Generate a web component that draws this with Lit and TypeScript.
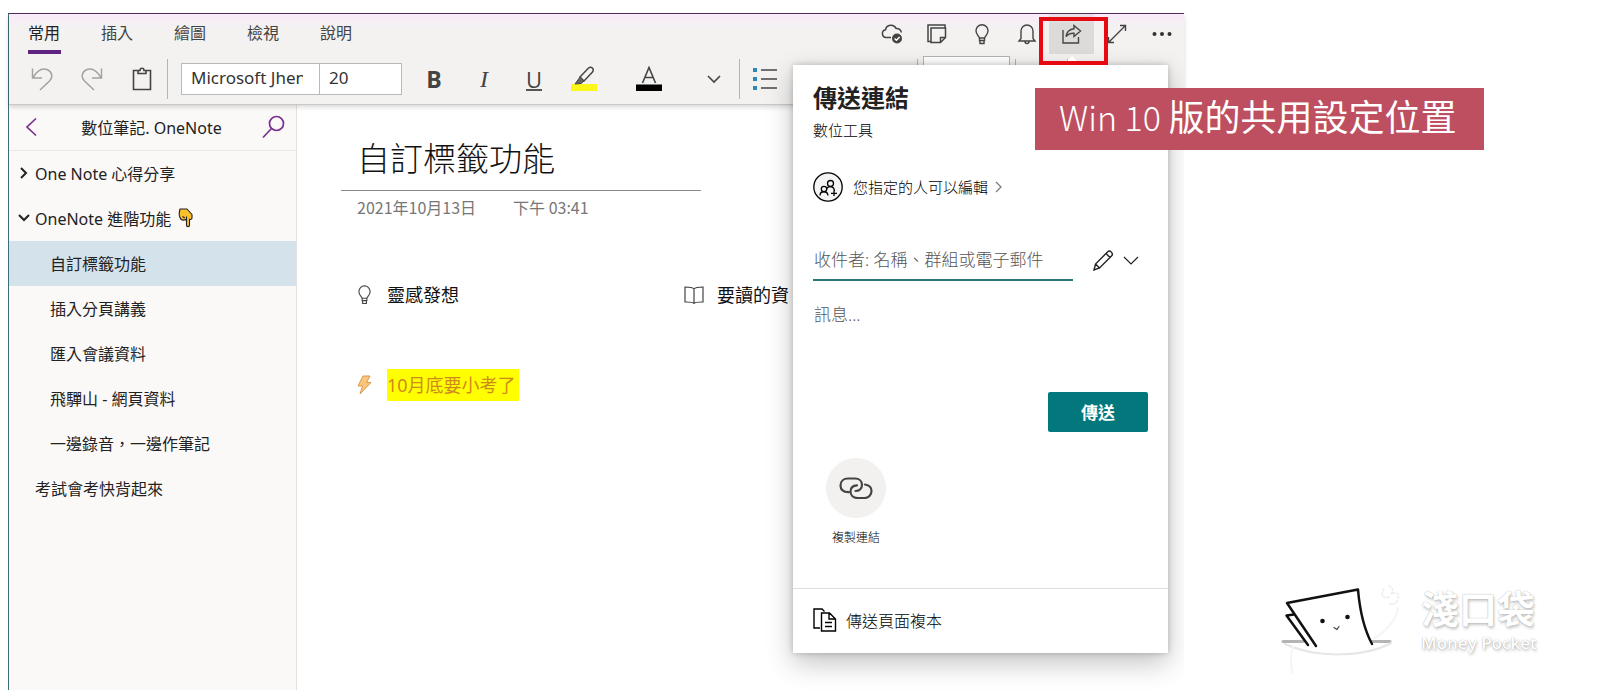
import { LitElement, html, css, svg } from "lit";
import { customElement, state } from "lit/decorators.js";
import { classMap } from "lit/directives/class-map.js";

const base = css`
  * { box-sizing: border-box; }
  button, input, textarea {
    font: inherit;
    color: inherit;
    background: none;
    border: 0;
    padding: 0;
    margin: 0;
    border-radius: 0;
    outline: none;
  }
  button { cursor: pointer; }
  svg { display: block; fill: none; stroke: currentColor; flex: none; }
`;

const bulb = svg`<path d="M6.500 16.500v-2C6.300 12 3 11 3 6.800a6 6 0 0 1 12 0C15 11 11.700 12 11.500 14.500v2zM6.500 14h5M7 16.500v3h4v-3"/>`;

@customElement("ribbon-bar")
class RibbonBar extends LitElement {
  @state() tab = "常用";

  static styles = [base, css`
    :host {
      display: block;
      background: linear-gradient(#f9e9f9, #f3f2f1 14px);
      border-bottom: 1px solid #c9c8c7;
      box-shadow: 0 2px 5px rgba(0, 0, 0, 0.16);
      color: #444;
    }
    .top { display: flex; height: 40px; }
    .tabs { display: flex; flex: 1; padding-left: 19px; gap: 40px; }
    .tab { width: 33px; height: 40px; font-size: 16px; white-space: nowrap; border-bottom: 4px solid transparent; text-align: left; }
    .tab span { display: block; line-height: 38px; height: 36px; }
    .tab.on { border-bottom-color: #5f2482; color: #222; }
    .ic { width: 45px; height: 40px; display: grid; place-items: center; }
    .ic.on { background: linear-gradient(rgba(220, 219, 218, 0.5), #dcdbda 10px); }
    .tools { display: flex; align-items: center; height: 50px; padding-left: 8px; overflow: hidden; }
    .tool { width: 50px; height: 50px; display: grid; place-items: center; flex: none; }
    .tool.off { color: #a3a2a1; }
    .tool.color { width: 80px; }
    .sep { width: 1px; height: 40px; background: #b5b4b3; flex: none; }
    .combo { display: flex; margin: 0 7px 0 13px; }
    .combo input {
      height: 32px;
      background: #fff;
      border: 1px solid #bab9b8;
      padding: 0 16px 3px 9px;
      font-size: 17px;
      color: #333;
      min-width: 0;
    }
    .face { width: 139px; }
    .size { width: 83px; margin-left: -1px; }
    .b { font: bold 23px "Open Sans", sans-serif; }
    .i { font: italic 24px "Liberation Serif", serif; }
    .u { font: 22px/24px "Open Sans", sans-serif; border-bottom: 2px solid #555; height: 24px; width: 16px; display: grid; place-items: center; }
    .sep.far { margin-left: 127px; }
    .style { margin-left: 5px; align-self: flex-start; margin-top: 2px; width: 87px; height: 44px; background: #fff; border: 1px solid #b5b4b3; }
    .sep.near { margin-left: 5px; }
    .sep.next { margin-left: 51px; }
  `];

  render() {
    return html`
      <div class="top">
        <nav class="tabs">
          ${["常用", "插入", "繪圖", "檢視", "說明"].map((t) => html`
            <button class=${classMap({ tab: true, on: t === this.tab })} @click=${() => (this.tab = t)}><span>${t}</span></button>`)}
        </nav>
        <button class="ic" aria-label="同步">
          <svg width="22" height="22" viewBox="0 0 22 22" stroke-width="1.5"><path d="M10 14.5H5a3.9 3.9 0 0 1-.5-7.7 5.6 5.6 0 0 1 10.600-1.3 4.300 4.300 0 0 1 5.200 4"/><circle cx="16" cy="15.500" r="5" fill="#444" stroke="none"/><path d="M13.600 15.500l1.800 1.800 3.200-3.400" stroke="#fff" stroke-width="1.400"/></svg>
        </button>
        <button class="ic" aria-label="摘要">
          <svg width="20" height="20" viewBox="0 0 20 20" stroke-width="1.500"><path d="M3.500 17.500h-2.500V1h17v2.500M4 4h14.500v9.500l-5 5H4zM18.500 13.500h-5v5"/></svg>
        </button>
        <button class="ic" aria-label="秘訣"><svg width="18" height="21" viewBox="0 0 18 21" stroke-width="1.400">${bulb}</svg></button>
        <button class="ic" aria-label="通知">
          <svg width="20" height="22" viewBox="0 0 20 22" stroke-width="1.400"><path d="M4 15.500V8a6 6 0 0 1 12 0v7.500l2 2.500H2zM8 18.500a2 2 0 0 0 4 0"/></svg>
        </button>
        <button class="ic on" aria-label="共用">
          <svg width="22" height="22" viewBox="0 0 22 22" stroke-width="1.400"><path d="M2 7v13h15.500v-6M13 2.500L19.500 8 13 13.500v-3.300c-3.500-.2-6 .8-8 3.300.8-4.500 3.500-7.300 8-7.700z"/></svg>
        </button>
        <button class="ic" aria-label="全螢幕">
          <svg width="20" height="20" viewBox="0 0 20 20" stroke-width="1.400"><path d="M1.500 18.500l17-17M13 1.500h5.500V7M1.500 13v5.500H7"/></svg>
        </button>
        <button class="ic" aria-label="更多">
          <svg width="20" height="6" viewBox="0 0 20 6"><g fill="#333" stroke="none"><circle cx="2.500" cy="3" r="2"/><circle cx="10" cy="3" r="2"/><circle cx="17.500" cy="3" r="2"/></g></svg>
        </button>
      </div>
      <div class="tools">
        <button class="tool off" aria-label="復原"><svg width="22" height="24" viewBox="0 0 22 24" stroke-width="1.500"><path d="M1.500 1.500V11H11M2 10.500C6 4 11 .8 16 2.500c5 2 6.500 7.500 2.500 11.500L9 23"/></svg></button>
        <button class="tool off" aria-label="重做"><svg width="22" height="24" viewBox="0 0 22 24" stroke-width="1.500"><path d="M20.500 1.500V11H11M20 10.500C16 4 11 .8 6 2.500c-5 2-6.500 7.500-2.500 11.500L13 23"/></svg></button>
        <button class="tool" aria-label="貼上"><svg width="20" height="24" viewBox="0 0 20 24" stroke-width="1.600"><path d="M6 3.500H1.500v19h17v-19H14M6 6.500v-3h2c0-3 4-3 4 0h2v3z"/></svg></button>
        <i class="sep"></i>
        <div class="combo">
          <input class="face" aria-label="字型" value="Microsoft Jhen">
          <input class="size" aria-label="字型大小" value="20">
        </div>
        <button class="tool b">B</button>
        <button class="tool i">I</button>
        <button class="tool"><span class="u">U</span></button>
        <button class="tool" aria-label="螢光筆"><svg width="26" height="26" viewBox="0 0 26 26" stroke-width="1.500"><path d="M0 18h26v7H0z" fill="#fbf719" stroke="none"/><path d="M9 11l8.500-9c3-2 6 .8 4 4L13 15z"/><path d="M9 11l4 4-3 2.500-6 .5z" fill="#666" stroke-width="1"/></svg></button>
        <button class="tool color" aria-label="字型色彩"><svg width="26" height="26" viewBox="0 0 26 26" stroke-width="1.600"><path d="M0 18.500h26V25H0z" fill="#000" stroke="none"/><path d="M6.500 17L13 1.500 19.500 17M8.800 11.500h8.400"/></svg></button>
        <button class="tool" aria-label="更多格式"><svg width="14" height="9" viewBox="0 0 14 9" stroke-width="1.600"><path d="M1 1l6 6 6-6"/></svg></button>
        <i class="sep"></i>
        <button class="tool" aria-label="項目符號"><svg width="24" height="24" viewBox="0 0 24 24"><path d="M0 1h4v4H0zM0 10h4v4H0zM0 19h4v4H0z" fill="#2f87b5" stroke="none"/><path d="M8 3h16M8 12h16M8 21h16" stroke-width="1.500"/></svg></button>
        <i class="sep far"></i>
        <i class="style"></i>
        <i class="sep near"></i>
        <i class="sep next"></i>
      </div>`;
  }
}

@customElement("page-list")
class PageList extends LitElement {
  @state() current = "自訂標籤功能";

  static styles = [base, css`
    :host { display: block; width: 288px; flex: none; background: #faf9f8; border-right: 1px solid #e3e2e1; color: #222; font-size: 16px; }
    .head { display: flex; align-items: center; height: 46px; padding: 0 11px 2px 16px; color: #7a2f8f; border-bottom: 1px solid #ebeae9; }
    .name { flex: 1; text-align: center; color: #222; white-space: nowrap; padding-left: 4px; }
    ul { list-style: none; margin: 0; padding: 0; }
    .row { display: flex; align-items: center; width: 100%; height: 45px; padding-bottom: 2px; text-align: left; white-space: nowrap; }
    .row.on { background: #d4e2eb; }
    .mark { width: 26px; padding-left: 3px; display: grid; place-items: center; flex: none; }
    .mark.sub { width: 41px; }
    .hand { margin-left: 7px; }
  `];

  render() {
    const pages = [
      { t: "One Note 心得分享", k: "closed" },
      { t: "OneNote 進階功能", k: "open" },
      { t: "自訂標籤功能", k: "sub" },
      { t: "插入分頁講義", k: "sub" },
      { t: "匯入會議資料", k: "sub" },
      { t: "飛驒山 - 網頁資料", k: "sub" },
      { t: "一邊錄音，一邊作筆記", k: "sub" },
      { t: "考試會考快背起來", k: "top" },
    ];
    return html`
      <div class="head">
        <button aria-label="返回"><svg width="12" height="20" viewBox="0 0 12 20" stroke-width="1.700"><path d="M11 1.500L2 10l9 8.500"/></svg></button>
        <span class="name">數位筆記. OneNote</span>
        <button aria-label="搜尋"><svg width="23" height="24" viewBox="0 0 23 24" stroke-width="1.700"><circle cx="14.500" cy="8.500" r="7"/><path d="M9.500 13.500L1 22.500"/></svg></button>
      </div>
      <ul>
        ${pages.map((p) => html`<li>
          <button class=${classMap({ row: true, on: p.t === this.current })} @click=${() => (this.current = p.t)}>
            <span class=${classMap({ mark: true, sub: p.k === "sub" })}>
              ${p.k === "closed" ? html`<svg width="8" height="12" viewBox="0 0 8 12" stroke-width="2"><path d="M1 1l5 5-5 5"/></svg>` : ""}
              ${p.k === "open" ? html`<svg width="12" height="8" viewBox="0 0 12 8" stroke-width="2"><path d="M1 1l5 5 5-5"/></svg>` : ""}
            </span>
            ${p.t}
            ${p.k === "open" ? html`<svg class="hand" width="16" height="20" viewBox="0 0 16 20" stroke="#6b4c1c" stroke-width="1.100" stroke-linejoin="round"><path d="M2 1h7l5 5.500v3.500c0 1.300-1.500 1.700-2.500 1.300v6c0 1.800-3 1.800-3 0v-6L6.500 12C4.500 12.300 2.500 11 2 9.500 1 8 1.500 3 2 1z" fill="#fbc02d"/><path d="M4.500 8.500l2.300 1.500M8.500 11.300V8.500"/></svg>` : ""}
          </button></li>`)}
      </ul>`;
  }
}

@customElement("note-page")
class NotePage extends LitElement {
  static styles = [base, css`
    :host { display: block; flex: 1; min-width: 0; background: #fff; padding: 31px 0 0 44px; color: #111; overflow: hidden; }
    h1 { font-size: 33px; line-height: 46px; font-weight: 300; margin: 0; padding: 0 0 8px 16px; border-bottom: 1px solid #8a8a8a; width: 360px; white-space: nowrap; }
    .when { display: flex; gap: 37px; padding: 4px 0 0 16px; font: 16px/24px "Noto Sans CJK TC", sans-serif; color: #777; }
    .tags { display: grid; grid-template-columns: 327px 1fr; padding: 60px 0 0 16px; row-gap: 58px; font-size: 18px; line-height: 32px; }
    .tag { display: flex; align-items: center; white-space: nowrap; }
    .tag svg { color: #444; }
    .pic { width: 30px; display: flex; flex: none; }
    .pic.book { width: 33px; }
    mark { background: #ff0; color: #cf8a1e; height: 32px; padding-right: 3px; }
  `];

  render() {
    return html`
      <h1>自訂標籤功能</h1>
      <div class="when"><span>2021年10月13日</span><span>下午 03:41</span></div>
      <div class="tags">
        <div class="tag"><span class="pic"><svg width="15" height="20" viewBox="1 0 16 21" stroke-width="1.200">${bulb}</svg></span>靈感發想</div>
        <div class="tag"><span class="pic book"><svg width="20" height="18" viewBox="0 0 20 18" stroke-width="1.200"><path d="M10 3C8.500 1 5 1 1 1v15c4 0 8-.2 9 1.500C11 15.800 15 16 19 16V1c-4 0-7.500 0-9 2zM10 3v14"/></svg></span>要讀的資</div>
        <div class="tag"><span class="pic"><svg width="15" height="20" viewBox="0 0 15 20"><path d="M6 1h7L9.500 7.500H14L3 19l2.500-8H1z" fill="#fbc57c" stroke="#d99a4e"/></svg></span><mark>10月底要小考了</mark></div>
      </div>`;
  }
}

@customElement("share-panel")
class SharePanel extends LitElement {
  static styles = [base, css`
    :host { display: block; background: #fff; color: #222; box-shadow: 0 10px 26px rgba(0, 0, 0, 0.24), 0 0 6px rgba(0, 0, 0, 0.22); }
    .beak { position: absolute; right: 87px; top: -9px; border: 9px solid transparent; border-top: 0; border-bottom-color: #fff; }
    .body { padding: 15px 20px 0; height: 523px; }
    h2 { margin: 0; font-size: 24px; line-height: 36px; font-weight: 700; }
    .where { font-size: 15px; line-height: 22px; padding-top: 3px; }
    .who { display: flex; align-items: center; font-size: 15px; line-height: 22px; margin-top: 31px; height: 30px; gap: 10px; }
    .who svg:last-child { margin-left: -3px; }
    .to { display: flex; align-items: center; margin-top: 37px; }
    .to input { flex: 1; min-width: 0; height: 42px; padding: 0 1px; font-size: 17px; border-bottom: 2px solid #2c7476; }
    input::placeholder, textarea::placeholder { color: #555; opacity: 1; }
    .perm { display: flex; align-items: center; gap: 9px; width: 75px; padding-left: 20px; }
    textarea { display: block; width: 100%; height: 90px; margin-top: 21px; padding: 0 1px; font-size: 17px; line-height: 26px; resize: none; }
    .send { display: block; width: 100px; height: 40px; padding-bottom: 2px; margin: 0 0 0 auto; background: #03787c; color: #fff; border-radius: 2px; font-size: 17px; font-weight: 700; }
    .copy { display: grid; justify-items: center; margin: 26px 0 0 13px; width: 60px; font-size: 12px; line-height: 18px; gap: 11px; white-space: nowrap; }
    .disc { width: 60px; height: 60px; border-radius: 50%; background: #f2f1f0; display: grid; place-items: center; color: #444; }
    .foot { display: flex; align-items: center; gap: 9px; width: 100%; height: 65px; padding: 0 20px 2px; border-top: 1px solid #dfdfdf; font-size: 16px; }
    .where, .who, .copy, .foot { font-weight: 300; color: #000; }
    input, textarea { font-weight: 300; }
  `];

  render() {
    return html`
      <i class="beak"></i>
      <div class="body">
        <h2>傳送連結</h2>
        <div class="where">數位工具</div>
        <button class="who">
          <svg width="30" height="30" viewBox="0 0 30 30" stroke-width="1.300"><circle cx="15" cy="15" r="14.200" fill="#f4f4f5"/><circle cx="17.500" cy="11.500" r="3"/><circle cx="11" cy="17" r="2.700"/><path d="M7 23.500c0-5 7.500-5 8 0M13.500 17c1.500-3.500 7.500-3.500 8 2M21 18.500v5.500M18 21.300h6"/></svg>
          您指定的人可以編輯
          <svg width="7" height="12" viewBox="0 0 7 12"><path d="M1 1l5 5-5 5" stroke="#777" stroke-width="1.200"/></svg>
        </button>
        <div class="to">
          <input aria-label="收件者" placeholder="收件者: 名稱、群組或電子郵件">
          <button class="perm" aria-label="權限">
            <svg width="21" height="21" viewBox="0 0 21 21" stroke-width="1.400"><path d="M1 20l1.500-6L14.500 2c2.500-2.500 6.500 1.500 4 4L6.500 18zM2.500 14L7 18.500M13 3.500L17.500 8"/></svg>
            <svg width="16" height="9" viewBox="0 0 16 9" stroke-width="1.200"><path d="M1 1l7 7 7-7"/></svg>
          </button>
        </div>
        <textarea aria-label="訊息" placeholder="訊息..."></textarea>
        <button class="send">傳送</button>
        <button class="copy">
          <span class="disc"><svg width="34" height="22" viewBox="0 0 34 22" stroke-width="2.200" stroke-linecap="round"><path d="M9.500 15.200C4 15 1.500 12 1.500 8.500 1.500 4.500 4.500 1.500 9 1.500h7c4.500 0 7 3 7 6.300 0 4-3 6.200-6.500 6.200M26 7.500c4 .6 6.500 3 6.500 6.500 0 4-3 7-7 7h-7c-4.500 0-7-3-7-6.500 0-3.700 2.500-6 6.500-6.200"/></svg></span>
          複製連結
        </button>
      </div>
      <button class="foot">
        <svg width="24" height="24" viewBox="0 0 24 24" stroke-width="1.400"><path d="M7 20H1V1h8l2.500 2.500M8.500 5h8l6 6v12h-14zM16 5v6h6.500M12 14.500h7M12 18.500h7"/></svg>
        傳送頁面複本
      </button>`;
  }
}

@customElement("pocket-logo")
class PocketLogo extends LitElement {
  static styles = [base, css`
    :host { display: flex; align-items: flex-start; gap: 19px; color: #fff; }
    .words { display: grid; padding-top: 1px; }
    .zh { font-size: 38px; line-height: 46px; font-weight: 700; text-shadow: 1px 2px 3px rgba(0, 0, 0, 0.22), 0 0 1px rgba(0, 0, 0, 0.35); }
    .en { font: 600 17px/24px "Open Sans", sans-serif; text-shadow: 1px 2px 3px rgba(0, 0, 0, 0.22), 0 0 1px rgba(0, 0, 0, 0.35); white-space: nowrap; }
  `];

  render() {
    return html`
      <svg width="121" height="94" viewBox="0 0 121 94" stroke-linecap="round" stroke-linejoin="round">
        <path d="M2 57.500h20M91 57.500h18" stroke="#b4b4b4" stroke-width="3"/>
        <path d="M4 60c30 14 78 14 106-1" stroke="#e6e6e6" stroke-width="2"/>
        <path d="M12 63c-3 8-2 16-1 26M93 54c12-6 22-18 24-30" stroke="#f5f5f5" stroke-width="2"/>
        <path d="M103 5c-4 6-1 10 5 8M108 2c4 1 5 5 2 8 5-3 9 0 7 5-2 6-8 7-9 3" stroke="#ececec" stroke-width="1.500" stroke-dasharray="2 2"/>
        <path d="M13 30.500l-7.500 1L27 61" stroke="#111" stroke-width="2.500"/>
        <path d="M35 62L6 19 77 5.500C79 29 84 47 91 60" fill="#fff" stroke="#111" stroke-width="2.500"/>
        <circle cx="41.500" cy="37" r="2.300" fill="#111" stroke="none"/><circle cx="66.500" cy="33" r="2.300" fill="#111" stroke="none"/>
        <path d="M53 43.500l3 2 2-3" stroke="#444" stroke-width="1.200"/>
      </svg>
      <div class="words"><span class="zh">淺口袋</span><span class="en">Money Pocket</span></div>`;
  }
}

@customElement("app-root")
class AppRoot extends LitElement {
  static styles = [base, css`
    :host {
      display: grid;
      grid-template-columns: minmax(0, 1fr) 417px;
      min-height: 100vh;
      padding: 13px 0 9px 8px;
      box-sizing: border-box;
      background: #fff;
      font-family: "Noto Sans", "Noto Sans CJK TC", sans-serif;
      font-weight: 400;
      overflow: hidden;
    }
    .win { position: relative; display: flex; flex-direction: column; border-top: 1px solid #56305f; border-left: 1px solid #3d6c78; }
    ribbon-bar { position: relative; z-index: 1; }
    .work { display: flex; flex: 1; }
    .clip { position: absolute; inset: 0 0 -9px 0; overflow: hidden; z-index: 2; pointer-events: none; }
    share-panel { position: absolute; top: 51px; right: 16px; width: 375px; pointer-events: auto; }
    .frame { position: absolute; z-index: 3; top: 3px; right: 76px; width: 69px; height: 48px; border: 4px solid #e60b10; }
    .banner {
      position: absolute;
      z-index: 4;
      top: 74px;
      left: calc(100% - 149px);
      padding: 0 28px 6px 24px;
      background: #bd4f61;
      color: #fff;
      font: 36px/54px "Noto Sans CJK TC", sans-serif;
      white-space: nowrap;
    }
    .ver { font-size: 34px; font-weight: 300; }
    aside { display: flex; align-items: flex-end; padding: 0 0 12px 97px; }
  `];

  render() {
    return html`
      <div class="win">
        <ribbon-bar></ribbon-bar>
        <div class="work"><page-list></page-list><note-page></note-page></div>
        <div class="clip"><share-panel></share-panel></div>
        <div class="frame"></div>
        <div class="banner"><span class="ver">Win 10 </span>版的共用設定位置</div>
      </div>
      <aside><pocket-logo></pocket-logo></aside>`;
  }
}
